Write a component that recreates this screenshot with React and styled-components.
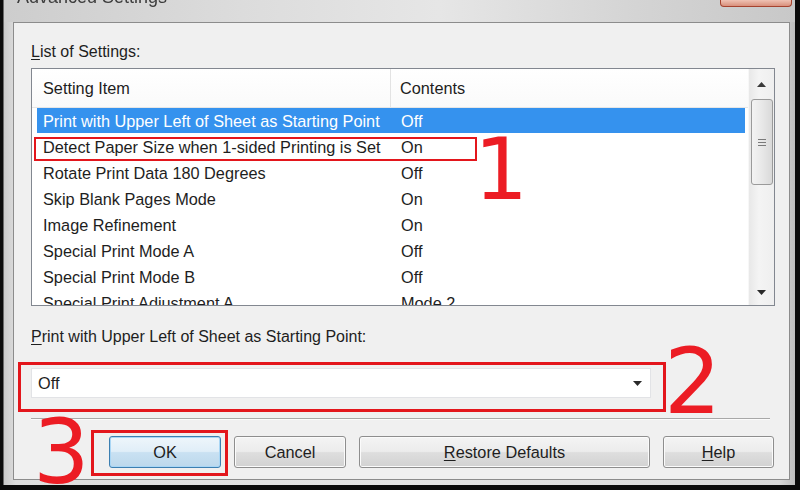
import styled, { createGlobalStyle } from "styled-components";

const Global = createGlobalStyle`
  html, body {
    margin: 0;
    padding: 0;
    background: #0b0b0b;
    overflow: hidden;
  }
`;

const UI_FONT = `"Liberation Sans", Arial, sans-serif`;

const Screen = styled.div`
  position: relative;
  width: 800px;
  height: 490px;
  box-sizing: border-box;
  padding: 0 5px 5px 3px;
  background: #0b0b0b;
  font-family: ${UI_FONT};
  color: #1e1e1e;
`;

const Window = styled.div`
  height: 485px;
  display: flex;
  flex-direction: column;
  box-sizing: border-box;
  padding: 0 5px 5px 9px;
  border-left: 1px solid #6a6a6a;
  background: linear-gradient(90deg, #c9c9c9 0%, #dedede 1.5%, #e4e4e4 50%, #d9d9d9 98%, #bdbdbd 100%);
`;

const TitleBar = styled.div`
  height: 22px;
  flex-shrink: 0;
  display: flex;
  align-items: flex-start;
  overflow: hidden;
  margin: 0 -5px 0 -9px;
  padding-left: 13px;
  background: linear-gradient(90deg, #cdcdcd 0%, #dcdcdc 30%, #e6e6e6 55%, #d4d4d4 80%, #c8c8c8 100%);
`;

const Title = styled.div`
  font-size: 18px;
  line-height: 22px;
  margin-top: -14px;
  color: #3c3c3c;
  filter: blur(0.3px);
`;

const CloseButton = styled.div`
  margin-left: auto;
  margin-right: 3px;
  width: 72px;
  height: 7px;
  box-sizing: border-box;
  border: 1px solid #a5432f;
  border-top: none;
  border-radius: 0 0 4px 4px;
  background: linear-gradient(#efc2b4, #d9907c);
`;

const Client = styled.div`
  flex: 1;
  display: flex;
  flex-direction: column;
  border: 1px solid #8c8c8c;
  background: #f0f0f0;
  padding: 19px 14px 0 17px;
`;

const Label = styled.div`
  font-size: 16px;
  line-height: 20px;
  margin-top: ${(p) => p.$top || 0}px;
`;

const Key = styled.span`
  text-decoration: underline;
  text-underline-offset: 2px;
`;

const ListBox = styled.div`
  margin-top: 6px;
  height: 238px;
  box-sizing: border-box;
  border: 1px solid #828790;
  background: #fff;
  display: flex;
`;

const ListBody = styled.div`
  flex: 1;
  overflow: hidden;
`;

const Header = styled.div`
  height: 38px;
  display: grid;
  grid-template-columns: 359px 1fr;
  border-bottom: 1px solid #e6e6e6;
  background: linear-gradient(#ffffff, #fafafa);
`;

const HeadCell = styled.div`
  display: flex;
  align-items: center;
  padding-left: ${(p) => p.$pad}px;
  font-size: 16.3px;
  border-right: ${(p) => (p.$divider ? "1px solid #e3e3e3" : "none")};
`;

const Row = styled.div`
  height: 26px;
  margin: 0 3px 0 5px;
  display: grid;
  grid-template-columns: 358px 1fr;
  align-items: center;
  font-size: 16.3px;
  background: ${(p) => (p.$selected ? "#3592ee" : "transparent")};
  color: ${(p) => (p.$selected ? "#ffffff" : "#1e1e1e")};
  box-shadow: ${(p) => (p.$selected ? "inset 0 -1px 0 #fff" : "none")};
`;

const Cell = styled.div`
  padding-left: 6px;
  white-space: nowrap;
`;

const ScrollBar = styled.div`
  width: 25px;
  display: flex;
  flex-direction: column;
  align-items: center;
  background: linear-gradient(90deg, #e8e8e8, #f4f4f4 40%, #efefef);
  border-left: 1px solid #f7f7f7;
`;

const ArrowBox = styled.div`
  height: 30px;
  width: 100%;
  display: flex;
  align-items: center;
  justify-content: center;
  padding-top: ${(p) => (p.$down ? "4px" : "0")};
  box-sizing: border-box;
`;

const Thumb = styled.div`
  width: 22px;
  height: 86px;
  box-sizing: border-box;
  border: 1px solid #9a9a9a;
  border-radius: 3px;
  background: linear-gradient(90deg, #f3f3f3, #e8e8e8 50%, #d9d9d9);
  display: flex;
  align-items: center;
  justify-content: center;
`;

const Spacer = styled.div`
  flex: 1;
`;

const Combo = styled.div`
  margin-top: 21px;
  width: 620px;
  height: 30px;
  box-sizing: border-box;
  border: 1px solid #e2e3e6;
  background: #fff;
  display: flex;
  align-items: center;
  padding: 0 8px 0 6px;
  font-size: 16.3px;
`;

const Separator = styled.div`
  margin-top: 20px;
  margin-right: 5px;
  height: 1px;
  background: #a8a8a8;
  border-bottom: 1px solid #fbfbfb;
`;

const ButtonRow = styled.div`
  margin-top: 16px;
  display: flex;
  gap: 13px;
  padding-left: 78px;
`;

const Button = styled.div`
  width: ${(p) => p.$w}px;
  height: 32px;
  box-sizing: border-box;
  display: flex;
  align-items: center;
  justify-content: center;
  font-size: 16.3px;
  border-radius: 3px;
  border: 1px solid ${(p) => (p.$default ? "#3c7fb1" : "#8e8e8e")};
  background: ${(p) =>
    p.$default
      ? "linear-gradient(#eef6fb 0%, #e0eef8 48%, #c9e1f2 52%, #bcd8ec 100%)"
      : "linear-gradient(#f4f4f4 0%, #ececec 48%, #dedede 52%, #d2d2d2 100%)"};
  box-shadow: inset 0 0 0 1px ${(p) => (p.$default ? "#a9d6f5" : "#fbfbfb")};
`;

/* red callouts drawn over the dialog */
const Mark = styled.div`
  position: absolute;
  left: ${(p) => p.$x}px;
  top: ${(p) => p.$y}px;
  width: ${(p) => p.$w}px;
  height: ${(p) => p.$h}px;
  box-sizing: border-box;
  border: ${(p) => p.$stroke}px solid #e3161c;
`;

const Num = styled.div`
  position: absolute;
  left: ${(p) => p.$x}px;
  top: ${(p) => p.$y}px;
  font-family: "DejaVu Sans", sans-serif;
  font-size: ${(p) => p.$size}px;
  line-height: 1;
  color: #ec1c24;
`;

const Tri = ({ down }) => (
  <svg width="9" height="5" viewBox="0 0 9 5">
    <path d={down ? "M0 0H9L4.5 5Z" : "M0 5H9L4.5 0Z"} fill={down ? "#2a2a2a" : "#3a3a3a"} />
  </svg>
);

const Gripper = () => (
  <svg width="10" height="9" viewBox="0 0 10 9">
    <path d="M1 1.5H9M1 4.5H9M1 7.5H9" stroke="#7a7a7a" strokeWidth="1" />
  </svg>
);

const settings = [
  ["Print with Upper Left of Sheet as Starting Point", "Off"],
  ["Detect Paper Size when 1-sided Printing is Set", "On"],
  ["Rotate Print Data 180 Degrees", "Off"],
  ["Skip Blank Pages Mode", "On"],
  ["Image Refinement", "On"],
  ["Special Print Mode A", "Off"],
  ["Special Print Mode B", "Off"],
  ["Special Print Adjustment A", "Mode 2"],
];

export default function App() {
  return (
    <Screen>
      <Global />
      <Window>
        <TitleBar>
          <Title>Advanced Settings</Title>
          <CloseButton />
        </TitleBar>
        <Client>
          <Label>
            <Key>L</Key>ist of Settings:
          </Label>
          <ListBox>
            <ListBody>
              <Header>
                <HeadCell $pad={11} $divider>Setting Item</HeadCell>
                <HeadCell $pad={9}>Contents</HeadCell>
              </Header>
              {settings.map(([item, value], i) => (
                <Row key={item} $selected={i === 0}>
                  <Cell>{item}</Cell>
                  <Cell>{value}</Cell>
                </Row>
              ))}
            </ListBody>
            <ScrollBar>
              <ArrowBox>
                <Tri />
              </ArrowBox>
              <Thumb>
                <Gripper />
              </Thumb>
              <Spacer />
              <ArrowBox $down>
                <Tri down />
              </ArrowBox>
            </ScrollBar>
          </ListBox>
          <Label $top={21}>
            <Key>P</Key>rint with Upper Left of Sheet as Starting Point:
          </Label>
          <Combo>
            Off
            <Spacer />
            <Tri down />
          </Combo>
          <Separator />
          <ButtonRow>
            <Button $w={112} $default>OK</Button>
            <Button $w={112}>Cancel</Button>
            <Button $w={291}>
              <span>
                <Key>R</Key>estore Defaults
              </span>
            </Button>
            <Button $w={111}>
              <span>
                <Key>H</Key>elp
              </span>
            </Button>
          </ButtonRow>
        </Client>
      </Window>

      <Mark $x={34} $y={137} $w={443} $h={24} $stroke={2} />
      <Mark $x={18} $y={362} $w={648} $h={50} $stroke={3} />
      <Mark $x={91} $y={430} $w={137} $h={46} $stroke={3} />
      <Num $x={474} $y={127} $size={85}>1</Num>
      <Num $x={664} $y={337} $size={90}>2</Num>
      <Num $x={33} $y={408} $size={89}>3</Num>
    </Screen>
  );
}
